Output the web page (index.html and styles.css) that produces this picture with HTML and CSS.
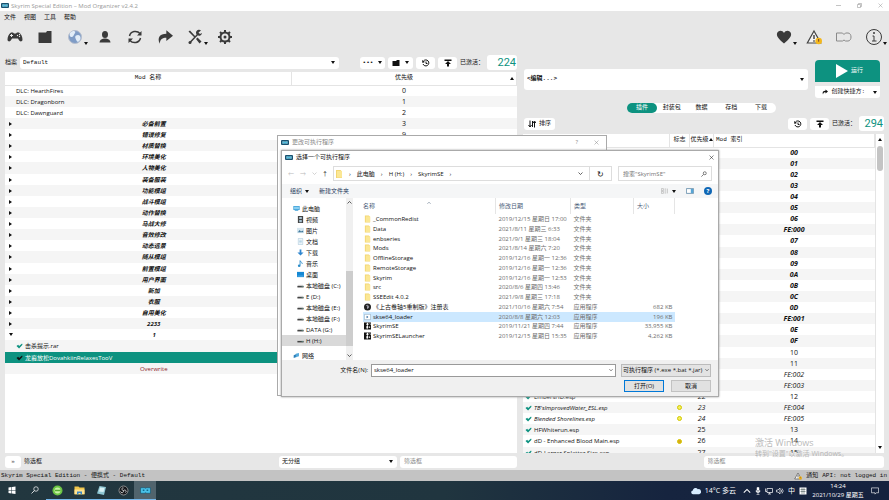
FILE: index.html
```html
<!DOCTYPE html>
<html lang="zh-CN">
<head>
<meta charset="utf-8">
<title>Skyrim Special Edition - Mod Organizer v2.4.2</title>
<link rel="stylesheet" href="styles.css">
</head>
<body>
<svg class="defs" aria-hidden="true">
  <symbol id="mo" viewBox="0 0 16 10"><rect x="0" y="0" width="16" height="10" rx="2" fill="#17516f"/><path d="M3 3h4l1 1 1-1h4v4H9L8 6 7 7H3z" fill="#4fc0e0" stroke="#d8f3fb" stroke-width=".6"/></symbol>
  <symbol id="check" viewBox="0 0 16 14"><path d="M1 7l4-3 2 3 7-6 1 3-8 9z" fill="currentColor"/></symbol>
  <symbol id="folder" viewBox="0 0 16 16"><path d="M2 0h9l3 3v13H2z" fill="#f3d672"/><path d="M4 2h10v13H4z" fill="#fbe795"/></symbol>
  <symbol id="dirfolder" viewBox="0 0 16 14"><path d="M1 3h7l2-2h5v12H1z" fill="currentColor"/></symbol>
  <symbol id="drive" viewBox="0 0 18 12"><path d="M3 4h12l2 4H1z" fill="#ddd"/><rect x="1" y="7" width="16" height="4" fill="#444"/><rect x="12" y="8" width="3" height="1" fill="#7fd"/></symbol>
  <symbol id="history" viewBox="0 0 16 16"><path d="M3 4a6 6 0 1 1-1 6M8 5v4h3" fill="none" stroke="#111" stroke-width="2"/><path d="M0 2l1 6 5-2z" fill="#111"/></symbol>
  <symbol id="backup" viewBox="0 0 16 16"><path d="M1 1h14v3H1zM8 4l6 6h-4v5H6v-5H2z" fill="#111"/></symbol>
  <symbol id="share" viewBox="0 0 24 22"><path d="M14 1l10 8-10 8v-5C8 12 5 14 4 21 0 12 4 6 14 6z" fill="currentColor"/></symbol>
  <symbol id="close" viewBox="0 0 10 10"><path d="M1 1l8 8M9 1L1 9" stroke="currentColor" fill="none"/></symbol>
  <symbol id="down" viewBox="0 0 10 10"><path d="M1 3l4 4 4-4" stroke="currentColor" fill="none" stroke-width="1.3"/></symbol>
  <symbol id="up" viewBox="0 0 10 10"><path d="M1 7l4-4 4 4" stroke="currentColor" fill="none" stroke-width="1.3"/></symbol>
  <symbol id="game" viewBox="0 0 16 16"><path d="M0 0h16v16H0z" fill="#111"/><path d="M8 0l3 4-3 3 2 3-3 6-2-6 2-3-2-3zM11 9h3v3h-3zM12 2h3v4z" fill="#fff"/></symbol>
  <symbol id="warn" viewBox="0 0 24 22"><path d="M12 2l10 18H2z" fill="#f4f4f4" stroke="#444" stroke-width="1.8"/><path d="M12 8v6M12 16v2" stroke="#333" stroke-width="2"/><circle cx="19" cy="17" r="5" fill="#f3b71c"/><path d="M19 14v4" stroke="#743" stroke-width="1.5"/></symbol>
</svg>

<div class="app">
  <header class="titlebar">
    <svg class="i-mo"><use href="#mo"/></svg>
    <h1>Skyrim Special Edition – Mod Organizer v2.4.2</h1>
    <div class="winbtns">
      <button aria-label="最小化"><svg viewBox="0 0 10 10"><path d="M0 5h10" stroke="#888"/></svg></button>
      <button aria-label="还原"><svg viewBox="0 0 10 10"><path d="M1 3h6v6H1zM3 3V1h6v6H7" stroke="#888" fill="none"/></svg></button>
      <button aria-label="关闭"><svg><use href="#close"/></svg></button>
    </div>
  </header>

  <nav class="menubar"><button>文件</button><button>视图</button><button>工具</button><button>帮助</button></nav>

  <div class="toolbar">
    <button aria-label="游戏"><svg viewBox="0 0 32 32"><path d="M8 7h4l2 2h4l2-2h4c5 3 7 9 7 15-2 5-6 3-9-3H10c-3 6-7 8-9 3 0-6 2-12 7-15z" fill="#3a3a3a"/><path d="M9 10v6M6 13h6" stroke="#e8e8e8" stroke-width="2"/><circle cx="21" cy="13" r="1.4" fill="#e8e8e8"/><circle cx="25" cy="11" r="1.4" fill="#e8e8e8"/><circle cx="25" cy="15" r="1.4" fill="#e8e8e8"/></svg></button>
    <button aria-label="安装"><svg viewBox="0 0 32 32"><path d="M3 7h15l2-3h9v24H3z" fill="#3a3a3a"/></svg></button>
    <button aria-label="Nexus" class="has-menu"><svg viewBox="0 0 32 32"><circle cx="16" cy="16" r="13" fill="#7f9cc6" stroke="#b7bfce" stroke-width="2"/><path d="M6 8c5-6 13-5 10 0s-3 7-6 8-6-2-4-8zM18 13c5-3 10 0 9 6s-6 9-8 4-4-7-1-10z" fill="#e2edf8"/></svg></button>
    <button aria-label="配置"><svg viewBox="0 0 32 32"><ellipse cx="16" cy="11" rx="6" ry="7" fill="#3a3a3a"/><path d="M5 27c0-5 4-7 9-8h4c5 1 9 3 9 8z" fill="#3a3a3a"/></svg></button>
    <button aria-label="刷新"><svg viewBox="0 0 32 32"><path d="M5 14C7 4 20 2 26 9M27 18C25 28 12 30 6 23" fill="none" stroke="#3a3a3a" stroke-width="3"/><path d="M29 4v9h-9zM3 28v-9h9z" fill="#3a3a3a"/></svg></button>
    <button aria-label="可执行程序"><svg class="dark"><use href="#share"/></svg></button>
    <button aria-label="工具" class="has-menu"><svg viewBox="0 0 32 32"><path d="M3 5l3-2 11 12-2 2zM18 20l3-3 8 8-4 4z" fill="#3a3a3a"/><path d="M6 27L22 10" stroke="#3a3a3a" stroke-width="3" stroke-linecap="round"/><path d="M28 3a6 6 0 1 0 2 5l-4 2-3-3z" fill="#3a3a3a"/><circle cx="6" cy="27" r="3" fill="#3a3a3a"/></svg></button>
    <button aria-label="设置"><svg viewBox="0 0 32 32"><circle cx="16" cy="16" r="9" fill="none" stroke="#3a3a3a" stroke-width="4"/><circle cx="16" cy="16" r="3" fill="#3a3a3a"/><path d="M16 2v5M16 25v5M2 16h5M25 16h5M6 6l4 4M22 22l4 4M26 6l-4 4M10 22l-4 4" stroke="#3a3a3a" stroke-width="4"/></svg></button>
    <span class="grow"></span>
    <button aria-label="支持" class="has-menu"><svg viewBox="0 0 32 32"><path d="M16 29C4 19 1 14 2 9c2-7 11-7 14-1 3-6 12-6 14 1 1 5-2 10-14 20z" fill="#3a3a3a"/></svg></button>
    <button aria-label="通知"><svg><use href="#warn"/></svg></button>
    <button aria-label="更新"><svg viewBox="0 0 32 32"><path d="M1 8h12l3 3 3-3h5c8 0 8 16 0 16h-5l-3-2-3 2H1z" fill="none" stroke="#8a8a8a" stroke-width="2"/></svg></button>
    <button aria-label="帮助" class="has-menu"><svg viewBox="0 0 32 32"><circle cx="16" cy="16" r="15" fill="none" stroke="#3a3a3a" stroke-width="2"/><path d="M13 14h3v10M12 24h9" fill="none" stroke="#3a3a3a" stroke-width="2"/><circle cx="16" cy="8" r="2" fill="#3a3a3a"/></svg></button>
  </div>

  <main class="panes">
    <section class="left">
      <div class="profile">
        <label for="profile">档案</label>
        <span class="select grow"><select id="profile"><option>Default</option></select></span>
        <span class="spacer"></span>
        <button class="btn wide" aria-label="列表选项"><b>•••</b><i class="tri"></i></button>
        <button class="btn wide" aria-label="打开文件夹"><svg><use href="#dirfolder"/></svg><i class="tri"></i></button>
        <button class="btn" aria-label="还原备份"><svg><use href="#history"/></svg></button>
        <button class="btn" aria-label="创建备份"><svg><use href="#backup"/></svg></button>
        <span class="active-label">已激活：</span>
        <output class="lcd">224</output>
      </div>
      <div class="list">
        <table class="mods">
          <colgroup><col class="c-name"><col></colgroup>
          <thead><tr><th>Mod 名称</th><th>优先级<i class="tri up sort"></i></th></tr></thead>
          <tbody>
            <tr><td class="dlc">DLC: HearthFires</td><td>0</td></tr>
            <tr><td class="dlc">DLC: Dragonborn</td><td>1</td></tr>
            <tr><td class="dlc">DLC: Dawnguard</td><td>2</td></tr>
            <tr class="sep"><td>必备前置</td><td class="plain">3</td></tr>
            <tr class="sep"><td>错误修复</td><td class="plain">9</td></tr>
            <tr class="sep"><td>材质替换</td><td></td></tr>
            <tr class="sep"><td>环境美化</td><td></td></tr>
            <tr class="sep"><td>人物美化</td><td></td></tr>
            <tr class="sep"><td>装备服装</td><td></td></tr>
            <tr class="sep"><td>功能模组</td><td></td></tr>
            <tr class="sep"><td>战斗模组</td><td></td></tr>
            <tr class="sep"><td>动作替换</td><td></td></tr>
            <tr class="sep"><td>马战大修</td><td></td></tr>
            <tr class="sep"><td>音效修改</td><td></td></tr>
            <tr class="sep"><td>动态远景</td><td></td></tr>
            <tr class="sep"><td>随从模组</td><td></td></tr>
            <tr class="sep"><td>前置模组</td><td></td></tr>
            <tr class="sep"><td>用户界面</td><td></td></tr>
            <tr class="sep"><td>新加</td><td></td></tr>
            <tr class="sep"><td>衣服</td><td></td></tr>
            <tr class="sep"><td>自用美化</td><td></td></tr>
            <tr class="sep"><td>2233</td><td></td></tr>
            <tr class="sep open"><td>1</td><td></td></tr>
            <tr><td class="mod"><svg><use href="#check"/></svg>击杀提示.rar</td><td></td></tr>
            <tr class="selected"><td class="mod"><svg><use href="#check"/></svg>龙裔放松DovahkiinRelaxesTooV</td><td></td></tr>
            <tr class="overwrite"><td>Overwrite</td><td></td></tr>
          </tbody>
        </table>
      </div>
      <div class="filters">
        <button class="btn more" aria-label="显示筛选">»</button>
        <span class="grow">筛选框</span>
        <span class="select group"><select aria-label="分组"><option>无分组</option></select></span>
        <input class="filter" type="text" placeholder="筛选框" aria-label="筛选模组">
      </div>
    </section>

    <section class="right">
      <div class="launch">
        <span class="select exe"><select aria-label="可执行程序"><option>&lt;编辑...&gt;</option></select></span>
        <div class="runcol">
          <button class="run"><i></i>运行</button>
          <button class="shortcut"><svg><use href="#share"/></svg>创建快捷方:<i class="tri"></i></button>
        </div>
      </div>
      <div class="tabs"><button class="on">插件</button><button>封装包</button><button>数据</button><button>存档</button><button>下载</button></div>
      <div class="sortrow">
        <button class="btn sortbtn"><svg viewBox="0 0 16 16"><path d="M4 1v12M1 10l3 4 3-4M9 2v12M13 15V4M10 6l3-4 3 4" stroke="#111" stroke-width="2" fill="none"/></svg>排序</button>
        <span class="grow"></span>
        <button class="btn" aria-label="还原备份"><svg><use href="#history"/></svg></button>
        <button class="btn" aria-label="创建备份"><svg><use href="#backup"/></svg></button>
        <span class="active-label">已激活：</span>
        <output class="lcd">294</output>
      </div>
      <div class="list plugin-list">
        <table class="plugins">
          <colgroup><col><col class="c-flag"><col class="c-prio"><col class="c-index"></colgroup>
          <thead><tr><th></th><th>标志</th><th>优先级<i class="tri up"></i></th><th class="idx">Mod 索引</th></tr></thead>
          <tbody>
            <tr class="master"><td></td><td><i class="dot"></i></td><td></td><td>00</td></tr>
            <tr class="master"><td></td><td></td><td></td><td>01</td></tr>
            <tr class="master"><td></td><td></td><td></td><td>02</td></tr>
            <tr class="master"><td></td><td></td><td></td><td>03</td></tr>
            <tr class="master"><td></td><td></td><td></td><td>04</td></tr>
            <tr class="master"><td></td><td></td><td></td><td>05</td></tr>
            <tr class="master"><td></td><td></td><td></td><td>06</td></tr>
            <tr class="master"><td></td><td></td><td></td><td>FE:000</td></tr>
            <tr class="master"><td></td><td></td><td></td><td>07</td></tr>
            <tr class="master"><td></td><td></td><td></td><td>08</td></tr>
            <tr class="master"><td></td><td></td><td></td><td>09</td></tr>
            <tr class="master"><td></td><td></td><td></td><td>0A</td></tr>
            <tr class="master"><td></td><td></td><td></td><td>0B</td></tr>
            <tr class="master"><td></td><td></td><td></td><td>0C</td></tr>
            <tr class="master"><td></td><td></td><td></td><td>0D</td></tr>
            <tr class="master"><td></td><td></td><td></td><td>FE:001</td></tr>
            <tr class="master"><td></td><td></td><td></td><td>0E</td></tr>
            <tr class="master"><td></td><td></td><td></td><td>0F</td></tr>
            <tr><td></td><td></td><td></td><td>10</td></tr>
            <tr><td></td><td></td><td></td><td>11</td></tr>
            <tr class="light"><td></td><td></td><td></td><td>FE:002</td></tr>
            <tr class="light"><td></td><td></td><td></td><td>FE:003</td></tr>
            <tr><td><svg><use href="#check"/></svg>EmbersHD.esp</td><td></td><td>22</td><td>12</td></tr>
            <tr class="light"><td><svg><use href="#check"/></svg>TB'sImprovedWater_ESL.esp</td><td><i class="dot"></i></td><td>23</td><td>FE:004</td></tr>
            <tr class="light"><td><svg><use href="#check"/></svg>Blended Shorelines.esp</td><td><i class="dot"></i></td><td>24</td><td>FE:005</td></tr>
            <tr><td><svg><use href="#check"/></svg>HFWhiterun.esp</td><td></td><td>25</td><td>13</td></tr>
            <tr><td><svg><use href="#check"/></svg>dD - Enhanced Blood Main.esp</td><td><i class="dot full"></i></td><td>26</td><td>14</td></tr>
            <tr><td><svg><use href="#check"/></svg>dD-Larger Splatter Size.esp</td><td></td><td>27</td><td>15</td></tr>
          </tbody>
        </table>
        <div class="vscroll"><i class="tri up"></i><span></span><i class="tri"></i></div>
      </div>
      <div class="filters"><input class="filter" type="text" placeholder="筛选框" aria-label="筛选插件"></div>
    </section>
  </main>

  <footer class="status">
    <span class="grow">Skyrim Special Edition - 便携式 - Default</span>
    <svg><use href="#warn"/></svg><span>通知</span><span>API: not logged in</span>
  </footer>

  <footer class="taskbar">
    <button aria-label="开始"><svg viewBox="0 0 16 16"><path d="M1 3l6-1v6H1zM8 2l7-1v7H8zM1 9h6v6l-6-1zM8 9h7v7l-7-1z" fill="#fff"/></svg></button>
    <button aria-label="搜索"><svg viewBox="0 0 16 16"><circle cx="10" cy="6" r="4.500" fill="none" stroke="#fff" stroke-width="1.400"/><path d="M7 9l-6 6" stroke="#fff" stroke-width="1.600"/></svg></button>
    <button class="app-on" aria-label="浏览器"><svg class="big" viewBox="0 0 22 22"><circle cx="11" cy="11" r="10" fill="#6cc644"/><circle cx="11" cy="11" r="6" fill="#c9f2a5"/><path d="M6 11h11" stroke="#57ad33" stroke-width="3"/></svg></button>
    <button class="app-on" aria-label="资源管理器"><svg class="big" viewBox="0 0 22 22"><path d="M1 3h8l2 2h10v14H1z" fill="#f1c74d"/><path d="M1 9h20v9H1z" fill="#ffe390"/><path d="M6 13h10v6h-3v-3H9v3H6z" fill="#3b87c8"/></svg></button>
    <button class="app-on" aria-label="记事本"><svg class="big" viewBox="0 0 22 22"><path d="M7 2l13 2-4 16L2 17z" fill="#8fc7d4"/><path d="M8 5l9 1-2 8-9-1z" fill="#d8f0f4"/></svg></button>
    <button class="app-on" aria-label="OBS"><svg class="big" viewBox="0 0 22 22"><circle cx="11" cy="11" r="9" fill="#17181c" stroke="#aaa" stroke-width="1.500"/><path d="M11 11c-5-1-4-6 0-5M11 11c4-3 7 2 4 4M11 11c1 5-5 6-6 2" stroke="#ccc" stroke-width="2" fill="none"/></svg></button>
    <button class="app-on current" aria-label="Mod Organizer"><svg viewBox="0 0 20 14" class="big"><path d="M1 2h7l2 1 2-1h7v10h-7l-2-1-2 1H1z" fill="#49c3ea" stroke="#0d4a65"/><path d="M5 5h3v3H5zM12 5h3v3h-3z" fill="#146b8d"/></svg></button>
    <span class="grow"></span>
    <span class="weather"><svg viewBox="0 0 22 16"><path d="M5 15a4 4 0 0 1-1-8 6 6 0 0 1 11-3 5 5 0 0 1 3 11z" fill="#d7ecff"/></svg>14°C 多云</span>
    <svg><use href="#up"/></svg>
    <svg viewBox="0 0 12 16"><path d="M4 1h4v8H4zM2 7c0 6 8 6 8 0M6 11v4M3 15h6" fill="#fff" stroke="#fff"/></svg>
    <svg viewBox="0 0 16 16"><path d="M4 3h11v8H4zM9 11v3M6 14h6M1 3v6h3" fill="none" stroke="#fff" stroke-width="1.400"/></svg>
    <svg viewBox="0 0 16 16"><path d="M1 6h3l4-4v12l-4-4H1zM10 5q3 3 0 6M12 3q5 5 0 10" fill="none" stroke="#fff" stroke-width="1.300"/></svg>
    <span class="ime">中</span>
    <svg viewBox="0 0 16 16"><path d="M1 1h14v14H1z" fill="#fff"/><path d="M3 5h10M3 9h10M6 2v12M10 2v12" stroke="#344"/></svg>
    <time><span>14:24</span><span>2021/10/29 星期五</span></time>
    <svg class="notice" viewBox="0 0 18 18"><path d="M1 2h16v11h-5l-3 3v-3H1z" fill="none" stroke="#fff" stroke-width="1.400"/></svg>
  </footer>
</div>

<div class="watermark"><p>激活 Windows</p><small>转到"设置"以激活 Windows。</small></div>

<div class="dialog back">
  <div class="dlg-title"><svg class="i-mo"><use href="#mo"/></svg><span class="grow">更改可执行程序</span><span class="q">?</span><button aria-label="关闭"><svg><use href="#close"/></svg></button></div>
</div>

<div class="dialog front" role="dialog" aria-labelledby="dlg">
  <div class="dlg-title"><svg class="i-mo"><use href="#mo"/></svg><span class="grow" id="dlg">选择一个可执行程序</span><button aria-label="关闭"><svg><use href="#close"/></svg></button></div>
  <div class="address">
    <span class="hist">←</span><span class="hist">→</span><svg class="hist"><use href="#down"/></svg><span>↑</span>
    <div class="path"><svg class="fold"><use href="#folder"/></svg><span>›</span><span>此电脑</span><span>›</span><span>H (H:)</span><span>›</span><span>SkyrimSE</span><span class="grow">›</span><svg><use href="#down"/></svg><button aria-label="刷新">↻</button></div>
    <div class="search"><input type="text" placeholder="搜索&quot;SkyrimSE&quot;" aria-label="搜索"><svg viewBox="0 0 16 16"><circle cx="10" cy="6" r="4" fill="none" stroke="#555" stroke-width="2"/><path d="M7 9l-6 6" stroke="#555" stroke-width="2"/></svg></div>
  </div>
  <div class="cmdbar">
    <button>组织 <i class="tri"></i></button><button>新建文件夹</button><span class="grow"></span>
    <button aria-label="视图"><svg viewBox="0 0 20 16"><path d="M1 2h5v5H1zM1 9h5v5H1zM9 3h4M9 6h4M9 10h4M9 13h4M16 2v12" fill="none" stroke="#aaa" stroke-width="1.500"/></svg><i class="tri"></i></button>
    <button aria-label="预览窗格"><svg viewBox="0 0 20 16"><path d="M1 2h18v12H1z" fill="#fff" stroke="#5a87a5" stroke-width="2"/><path d="M12 3h6v10h-6z" fill="#56a5d6"/></svg></button>
    <button class="help" aria-label="帮助">?</button>
  </div>
  <div class="browser">
    <ul class="tree">
      <li class="root"><svg viewBox="0 0 20 16"><path d="M1 1h18v11H1zM5 13h10v2H5z" fill="#3ea0d8"/><path d="M3 3h14v7H3z" fill="#8bd0f2"/></svg>此电脑</li>
      <li><svg viewBox="0 0 16 16"><path d="M2 0h12v16H2z" fill="#444"/><path d="M5 2h6v5H5zM5 9h6v5H5z" fill="#a9c3d3"/></svg>视频</li>
      <li><svg viewBox="0 0 16 16"><path d="M0 2h16v12H0z" fill="#d5e6ef"/><path d="M2 12l4-5 3 3 5-2v4z" fill="#42799c"/></svg>图片</li>
      <li><svg viewBox="0 0 16 16"><path d="M3 1h10v14H3z" fill="#fff" stroke="#82b1cc"/><path d="M5 5h6M5 8h6M5 11h6" stroke="#5b9fc5"/></svg>文档</li>
      <li><svg viewBox="0 0 16 16"><path d="M6 1h4v7h5l-7 7-7-7h5z" fill="#2f86cf"/></svg>下载</li>
      <li><svg viewBox="0 0 16 16"><path d="M7 1v11M7 2c1 3 5 2 5 7" fill="none" stroke="#2b8cc9" stroke-width="2"/><circle cx="5" cy="13" r="3" fill="#2b8cc9"/></svg>音乐</li>
      <li><svg viewBox="0 0 16 16"><path d="M0 2h16v12H0z" fill="#1588d4"/><path d="M1 11h14v1H1z" fill="#9bd6f8"/></svg>桌面</li>
      <li><svg><use href="#drive"/></svg>本地磁盘 (C:)</li>
      <li><svg><use href="#drive"/></svg>E (D:)</li>
      <li><svg><use href="#drive"/></svg>本地磁盘 (E:)</li>
      <li><svg><use href="#drive"/></svg>本地磁盘 (F:)</li>
      <li><svg><use href="#drive"/></svg>DATA (G:)</li>
      <li class="cur"><svg><use href="#drive"/></svg>H (H:)</li>
      <li class="root net"><svg viewBox="0 0 20 16"><path d="M2 7l8-3v8l-8 3z" fill="#2d7fb8"/><path d="M8 3l9-2v9l-9 3z" fill="#53a9dc"/></svg>网络</li>
    </ul>
    <div class="treescroll"><svg><use href="#up"/></svg><span></span><svg><use href="#down"/></svg></div>
    <div class="files">
      <table>
        <colgroup><col><col class="f-date"><col class="f-type"><col class="f-size"></colgroup>
        <thead><tr><th><span>名称</span><svg><use href="#up"/></svg></th><th>修改日期</th><th>类型</th><th>大小</th></tr></thead>
        <tbody>
          <tr><td><svg><use href="#folder"/></svg>_CommonRedist</td><td>2019/12/15 星期日 17:00</td><td>文件夹</td><td></td></tr>
          <tr><td><svg><use href="#folder"/></svg>Data</td><td>2021/8/11 星期三 6:33</td><td>文件夹</td><td></td></tr>
          <tr><td><svg><use href="#folder"/></svg>enbseries</td><td>2021/9/1 星期三 18:04</td><td>文件夹</td><td></td></tr>
          <tr><td><svg><use href="#folder"/></svg>Mods</td><td>2021/8/14 星期六 7:20</td><td>文件夹</td><td></td></tr>
          <tr><td><svg><use href="#folder"/></svg>OfflineStorage</td><td>2019/12/16 星期一 12:36</td><td>文件夹</td><td></td></tr>
          <tr><td><svg><use href="#folder"/></svg>RemoteStorage</td><td>2019/12/16 星期一 12:36</td><td>文件夹</td><td></td></tr>
          <tr><td><svg><use href="#folder"/></svg>Skyrim</td><td>2019/12/16 星期一 12:53</td><td>文件夹</td><td></td></tr>
          <tr><td><svg><use href="#folder"/></svg>src</td><td>2020/8/6 星期四 13:46</td><td>文件夹</td><td></td></tr>
          <tr><td><svg><use href="#folder"/></svg>SSEEdit 4.0.2</td><td>2021/9/8 星期三 17:18</td><td>文件夹</td><td></td></tr>
          <tr><td><svg viewBox="0 0 16 16"><circle cx="8" cy="8" r="8" fill="#222"/><path d="M5 5c5-3 8 3 3 7M8 6v5" stroke="#dde" stroke-width="1.500" fill="none"/></svg>《上古卷轴5重制版》注册表</td><td>2021/10/16 星期六 7:54</td><td>应用程序</td><td>682 KB</td></tr>
          <tr class="sel"><td><svg viewBox="0 0 16 16"><path d="M1 2h14v12H1z" fill="#fff" stroke="#7895a8"/><path d="M6 5l4 3-4 3z" fill="#235d96"/></svg>skse64_loader</td><td>2020/8/8 星期六 12:03</td><td>应用程序</td><td>196 KB</td></tr>
          <tr><td><svg><use href="#game"/></svg>SkyrimSE</td><td>2019/11/21 星期四 7:44</td><td>应用程序</td><td>33,955 KB</td></tr>
          <tr><td><svg><use href="#game"/></svg>SkyrimSELauncher</td><td>2019/12/15 星期日 15:35</td><td>应用程序</td><td>4,262 KB</td></tr>
        </tbody>
      </table>
    </div>
  </div>
  <div class="dlg-foot">
    <label for="fname">文件名(N):</label>
    <span class="combo"><input id="fname" type="text" value="skse64_loader"><svg><use href="#down"/></svg></span>
    <span class="combo type"><select aria-label="文件类型"><option>可执行程序 (*.exe *.bat *.jar)</option></select><svg><use href="#down"/></svg></span>
    <div class="actions"><button class="ok">打开(O)</button><button>取消</button></div>
  </div>
</div>
</body>
</html>
```
FILE: styles.css
```css
* { box-sizing: border-box; }
:root {
  --teal: #0d9280;
  --bg: #e7e7e7;
  --stripe: #f5f5f5;
  --ui: "Open Sans", "Noto Sans CJK SC", sans-serif;
  --mono: "Liberation Mono", "Noto Sans CJK SC", monospace;
}
body { margin: 0; font: 6px/10px var(--ui); color: #111; overflow: hidden; }
button, input, select { font: inherit; color: inherit; border: 0; margin: 0; padding: 0; background: none; border-radius: 0; }
select { appearance: none; outline: 0; }
h1, p, ul { margin: 0; padding: 0; font-weight: 400; list-style: none; }
svg { display: block; width: 8px; height: 8px; flex: none; }
.defs { position: absolute; width: 0; height: 0; }
.grow { flex: 1; }
.tri { width: 0; height: 0; border: 2px solid transparent; border-top: 3px solid #111; border-bottom: 0; flex: none; }
.tri.up { border-top: 0; border-bottom: 3px solid #111; }

.app { display: flex; flex-direction: column; height: 100vh; background: var(--bg); }
.titlebar { display: flex; align-items: center; height: 11px; background: #fff; padding: 0 6px 0 1px; gap: 2px; color: #999; }
.titlebar h1 { flex: 1; font-size: 6px; line-height: 10px; }
.i-mo { width: 8px; height: 5px; }
.winbtns { display: flex; gap: 16px; }
.winbtns svg { width: 5px; height: 5px; }
.menubar { display: flex; gap: 8px; height: 11px; padding: 0 4px; align-items: center; }
.toolbar { display: flex; height: 30px; padding: 0 6px; gap: 12px; align-items: center; }
.toolbar button { display: flex; align-items: flex-end; width: 18px; }
.toolbar svg { width: 16px; height: 16px; margin: 0 1px; }
.toolbar .dark { color: #3a3a3a; }
.has-menu::after { content: ""; border: 2px solid transparent; border-top: 3px solid #111; border-bottom: 0; margin-right: -4px; }

.panes { flex: 1; min-height: 0; display: grid; grid-template-columns: 512fr 361fr; grid-template-rows: minmax(0, 1fr); gap: 6px; padding: 0 5px; font-family: var(--mono); }
.left, .right { display: flex; flex-direction: column; min-width: 0; min-height: 0; }
.profile { display: flex; align-items: center; gap: 3px; height: 20px; padding-top: 1px; }
.select { display: grid; align-items: center; background: #fff; border-radius: 3px; height: 12px; }
.select > select, .select::after { grid-area: 1 / 1; }
.select > select { width: 100%; padding: 0 3px; }
.select::after { content: ""; justify-self: end; margin-right: 4px; border: 2px solid transparent; border-top: 3px solid #111; border-bottom: 0; pointer-events: none; }
.spacer { width: 15px; }
.btn { display: flex; align-items: center; justify-content: center; gap: 5px; background: #fff; border-radius: 3px; width: 19px; height: 12px; }
.btn.wide { width: 25px; }
.active-label { width: 24px; white-space: nowrap; }
.lcd { width: 30px; height: 15px; background: #fff; border-radius: 3px; color: var(--teal); font: 11px/15px "Roboto", sans-serif; text-align: right; padding-right: 1px; }

.list { flex: 1; min-height: 0; overflow: hidden; background: #fff; }
table { border-collapse: collapse; table-layout: fixed; width: 100%; }
th, td { padding: 0; line-height: 10px; white-space: nowrap; overflow: hidden; }
th { font-weight: 400; }
.mods .c-name { width: 56%; }
.mods th, .plugins th { height: 13px; font-family: var(--mono); border-bottom: 1px solid #e4e4e4; border-right: 1px solid #e4e4e4; }
.mods .sort { float: right; margin: 4px 2px 0 -6px; }
.mods tbody, .plugins tbody { font-family: var(--ui); text-align: center; }
.mods tbody tr, .plugins tbody tr { height: 11px; }
.mods tbody tr:nth-child(8n), .plugins tbody tr:nth-child(9n) { height: 12px; }
.mods tbody tr:nth-child(even), .plugins tbody tr:nth-child(even) { background: var(--stripe); }
.mods td:last-child, .plugins td:nth-child(n+3) { font-size: 7px; }
.mods .dlc { text-align: left; padding-left: 11px; }
.sep { font-weight: 700; font-style: italic; }
.sep td:first-child::before { content: ""; float: left; margin: 3px 4px 0; border: 2px solid transparent; border-left: 3px solid #111; border-right: 0; }
.sep.open td:first-child::before { border: 2px solid transparent; border-top: 3px solid #111; border-bottom: 0; }
.sep .plain { font-weight: 400; font-style: normal; }
.mod { text-align: left; padding-left: 11px; }
.mod svg, .plugins td svg { display: inline-block; vertical-align: middle; width: 7px; height: 6px; margin-right: 2px; color: var(--teal); }
.mods tbody .selected { background: var(--teal); color: #fff; }
.mods .selected svg { color: #111; }
.overwrite { color: #8b1a2b; }
.overwrite td { padding-left: 11px; }
.filters { display: flex; align-items: center; gap: 3px; height: 17px; }
.more { width: 16px; color: #555; }
.group { width: 118px; }
.filter { width: 117px; height: 12px; background: #fff; border-radius: 3px; padding: 0 4px; }
.filter::placeholder { color: #888; }
.right .filters { justify-content: flex-end; }
.right .filter { width: 50%; }

.launch { display: flex; gap: 7px; align-items: center; padding: 8px 4px 0 1px; }
.exe { flex: 1; height: 21px; font-weight: 700; }
.runcol { display: flex; flex-direction: column; gap: 4px; width: 65px; }
.run { display: flex; align-items: center; justify-content: center; gap: 3px; height: 22px; padding-left: 4px; background: var(--teal); color: #fff; border-radius: 4px 4px 0 0; }
.run i { border: 7px solid transparent; border-left: 12px solid #fff; border-right: 0; }
.shortcut { display: flex; align-items: center; justify-content: flex-end; gap: 3px; height: 12px; padding-right: 3px; background: #fff; border-radius: 0 0 3px 3px; }
.shortcut svg { width: 6px; height: 6px; }
.shortcut .tri { margin-left: 5px; }
.tabs { display: flex; align-self: center; width: 149px; height: 10px; margin-top: 5px; margin-right: 4px; background: #fff; border-radius: 5px; }
.tabs button { flex: 1; border-radius: 5px; }
.tabs .on { background: var(--teal); color: #fff; }
.sortrow { display: flex; align-items: center; gap: 3px; height: 21px; padding-left: 1px; }
.sortbtn { width: 31px; gap: 3px; }
.sortrow .lcd { width: 25px; }
.plugin-list { display: flex; }
.plugins { flex: 1; width: auto; height: 0; }
.plugins .c-flag { width: 20px; }
.plugins .c-prio { width: 24px; }
.plugins .c-index { width: 161px; }
.plugins th .tri { display: inline-block; vertical-align: middle; }
.plugins .idx { text-align: left; padding-left: 2px; }
.plugins td:first-child { text-align: left; padding-left: 2px; }
.master { font-weight: 700; font-style: italic; }
.light { font-style: italic; }
.dot { display: block; width: 5px; height: 5px; margin: auto; border: 1px solid #d2c800; border-radius: 3px; background: #f4ef60; }
.dot.full { background: #dba81c; }
.vscroll { width: 9px; display: flex; flex-direction: column; align-items: center; padding: 4px 0; border-left: 1px solid #e4e4e4; }
.vscroll span { width: 6px; height: 25px; margin: 5px 0 auto; background: #c4c4c4; border-radius: 3px; }

.status { display: flex; align-items: center; gap: 4px; height: 11px; padding: 0 2px 0 1px; background: #c3c3c3; font-family: var(--mono); }
.taskbar { display: flex; align-items: center; height: 19px; padding-right: 10px; gap: 3px; background: linear-gradient(90deg, #22373f, #20353f 50%, #16243f 75%, #15223e); color: #fff; }
.taskbar button { display: flex; align-items: center; justify-content: center; width: 23px; height: 19px; margin-right: -3px; border-bottom: 1px solid transparent; }
.taskbar .big { width: 11px; height: 11px; }
.taskbar .app-on { width: 22px; border-bottom-color: #76b9ed; background-clip: padding-box; }
.taskbar .current { background: #51646d; }
.weather { display: flex; align-items: center; gap: 4px; font-size: 7px; margin-right: 4px; }
.weather svg { width: 10px; }
.ime { font-size: 7px; width: 9px; text-align: center; }
time { display: flex; flex-direction: column; align-items: center; line-height: 9px; width: 56px; }
.notice { margin-left: 2px; }

.watermark { position: absolute; left: 755px; top: 437px; color: #aaa; opacity: .8; font-family: var(--ui); }
.watermark p { font-size: 9px; line-height: 12px; }
.watermark small { display: block; font-size: 7px; line-height: 10px; }

.dialog { position: absolute; background: #fff; border: 1px solid #aaa; }
.back { left: 277px; top: 135px; width: 330px; height: 261px; color: #888; }
.front { left: 281px; top: 150px; width: 438px; height: 247px; display: flex; flex-direction: column; box-shadow: 0 0 2px #999; }
.dlg-title { display: flex; align-items: center; height: 12px; gap: 3px; padding: 0 4px 0 3px; }
.dlg-title button svg { width: 5px; height: 5px; }
.q { margin-right: 13px; }
.back .dlg-title { padding-right: 7px; }
.address { display: flex; align-items: center; gap: 5px; height: 21px; padding: 0 6px; font-size: 6px; }
.address svg { width: 5px; height: 5px; }
.hist { color: #bbb; width: 7px; }
.path { flex: 1; display: flex; align-items: center; gap: 6px; height: 15px; border: 1px solid #ddd; padding-left: 1px; }
.path .fold { width: 8px; height: 8px; }
.path button { width: 22px; height: 13px; border-left: 1px solid #ddd; font-size: 8px; }
.search { display: flex; align-items: center; width: 94px; height: 15px; margin-left: 1px; padding: 0 4px; border: 1px solid #ddd; }
.search input { flex: 1; width: 0; outline: 0; }
.search svg { width: 6px; height: 6px; }
.cmdbar { display: flex; align-items: center; gap: 10px; height: 14px; padding: 0 6px 0 8px; background: #f5f6f7; color: #1e395b; }
.cmdbar button { display: flex; align-items: center; gap: 3px; }
.cmdbar .help { width: 8px; height: 8px; justify-content: center; border-radius: 50%; background: #0f67b5; color: #fff; font-weight: 700; }
.browser { flex: 1; min-height: 0; display: flex; overflow: hidden; }
.tree { width: 64px; padding-top: 5px; }
.tree li { display: flex; align-items: center; gap: 2px; height: 11px; padding-left: 15px; white-space: nowrap; }
.tree li svg { width: 7px; height: 7px; }
.tree .root { padding-left: 11px; }
.tree .cur { background: #d9d9d9; }
.tree .net { margin-top: 4px; }
.treescroll { width: 7px; display: flex; flex-direction: column; align-items: center; padding: 2px 0; background: #f0f0f0; }
.treescroll svg { width: 5px; height: 5px; }
.treescroll span { width: 7px; height: 75px; margin: auto 0 7px; background: #cdcdcd; }
.files { flex: 1; padding: 0 43px 0 10px; }
.files table { color: #6d6d6d; }
.files .f-date { width: 75px; }
.files .f-type { width: 63px; }
.files .f-size { width: 41px; }
.files thead tr { height: 16px; }
.files th { text-align: left; padding-left: 3px; border-right: 1px solid #e5e5e5; color: #4c607a; }
.files th:first-child { padding-left: 0; }
.files th svg { display: inline-block; width: 4px; height: 4px; margin-left: 52px; vertical-align: top; }
.files tbody tr { height: 10px; }
.files tbody tr:nth-child(4n) { height: 9px; }
.files td { line-height: 9px; padding-left: 3px; }
.files td:first-child { color: #111; padding-left: 1px; }
.files td:last-child { text-align: right; padding-right: 2px; }
.files td svg { display: inline-block; width: 7px; height: 8px; margin-right: 2px; vertical-align: middle; }
.files .sel { background: #cce8ff; }
.dlg-foot { display: grid; grid-template-columns: 86px 1fr 90px; align-items: center; gap: 2px 3px; height: 36px; padding: 3px 7px 4px 0; background: #f0f0f0; }
.dlg-foot label { text-align: right; }
.combo { display: flex; align-items: center; height: 13px; background: #fff; border: 1px solid #999; padding: 0 2px; margin-right: 2px; }
.combo input, .combo select { flex: 1; width: 0; outline: 0; }
.combo svg { width: 4px; height: 4px; }
.combo.type { background: #e3e3e3; border-color: #bbb; margin: 0; padding: 0 1px; }
.actions { grid-column: 1 / -1; justify-self: end; display: flex; gap: 7px; }
.actions button { width: 40px; height: 12px; line-height: 8px; background: #e1e1e1; border: 1px solid #c2c2c2; }
.actions .ok { border: 1px solid #0078d7; }
```
